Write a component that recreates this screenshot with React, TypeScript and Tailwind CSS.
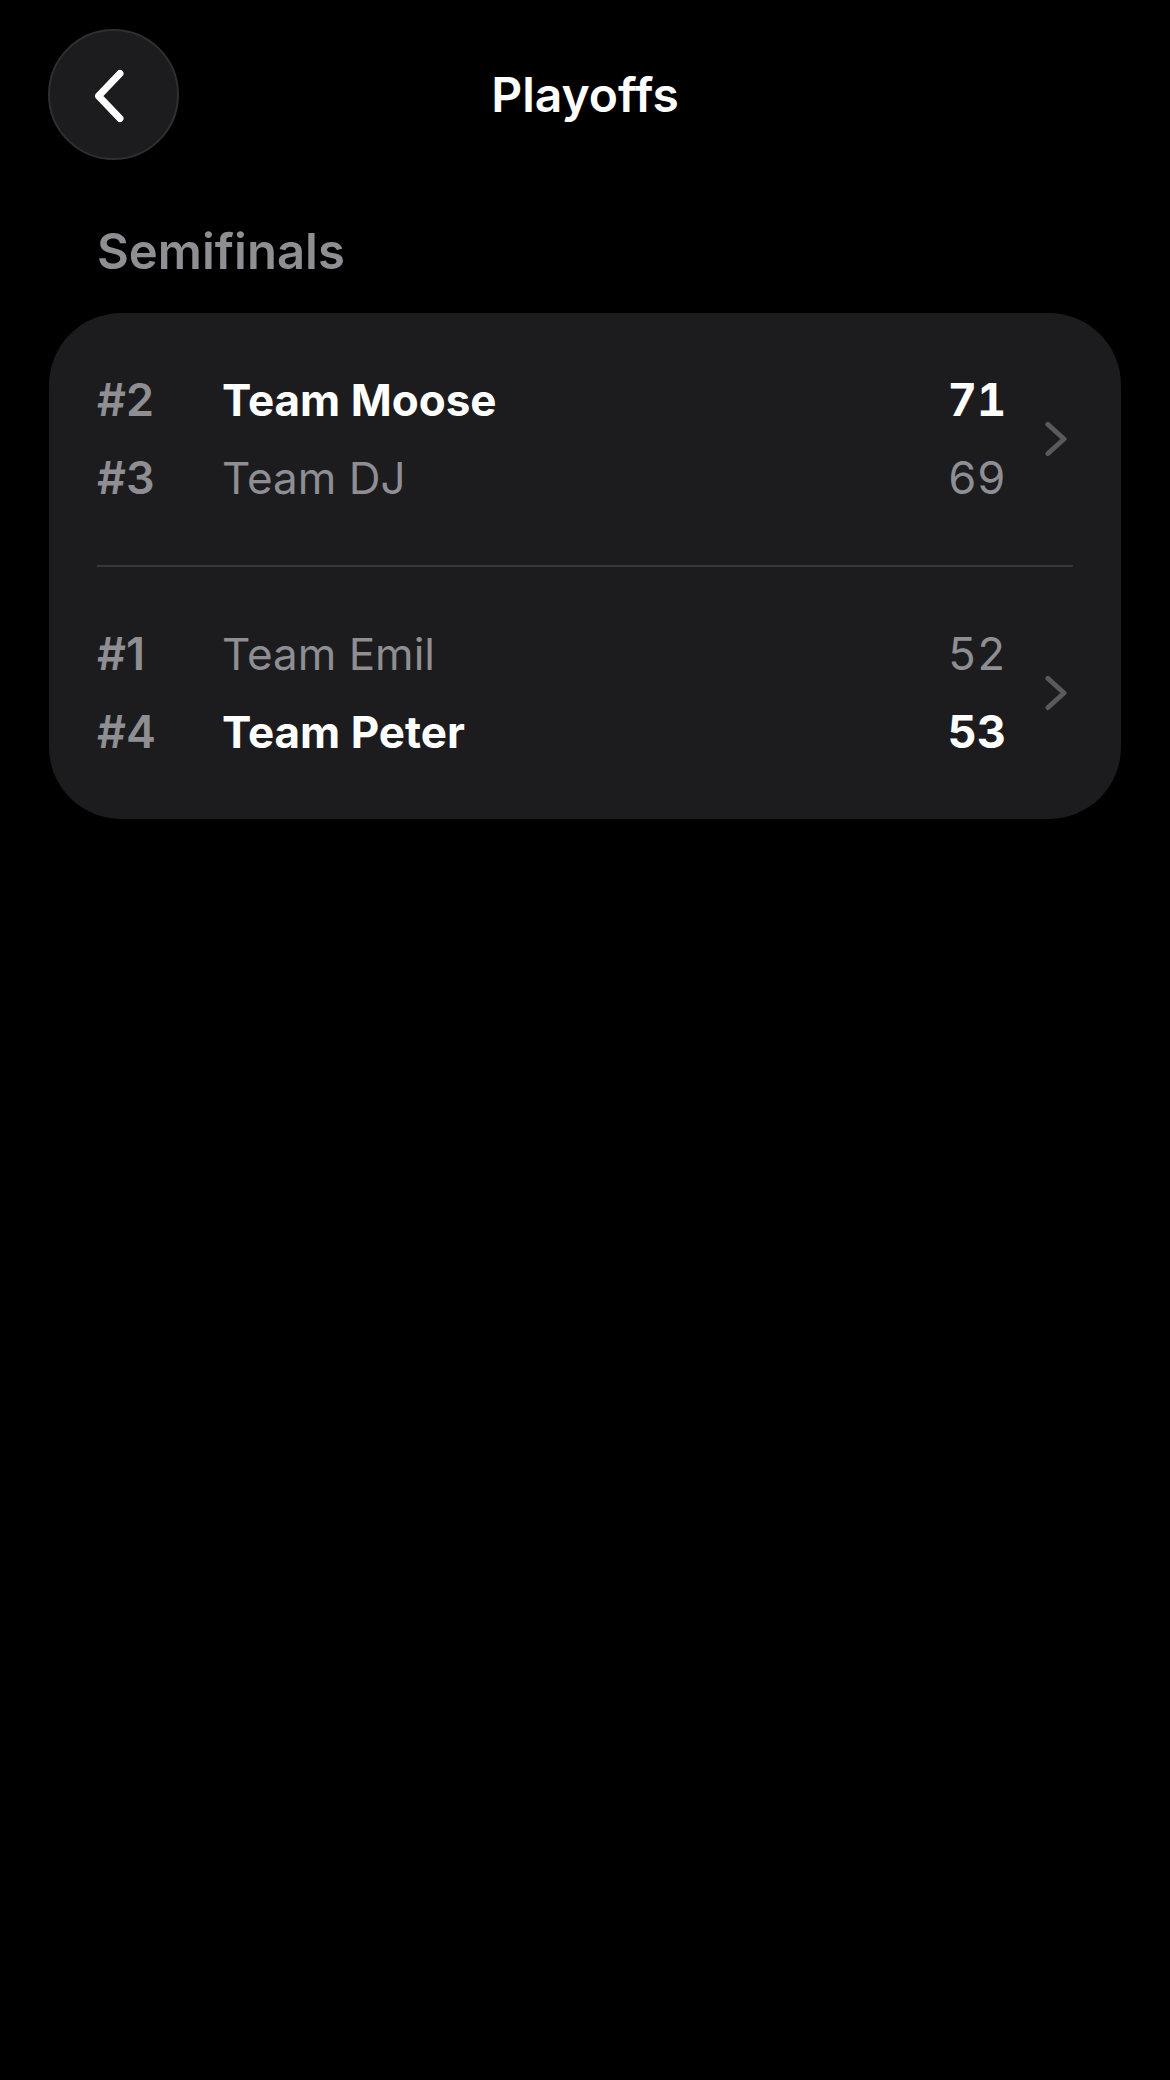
type Side = { seed: string; name: string; score: number; won: boolean };

const matches: Side[][] = [
  [
    { seed: "#2", name: "Team Moose", score: 71, won: true },
    { seed: "#3", name: "Team DJ", score: 69, won: false },
  ],
  [
    { seed: "#1", name: "Team Emil", score: 52, won: false },
    { seed: "#4", name: "Team Peter", score: 53, won: true },
  ],
];

function Chevron() {
  return (
    <svg width="28" height="40" viewBox="0 0 28 40" className="ml-[39px] shrink-0">
      <path
        d="M3 5.5 L19 20 L3 34.5"
        fill="none"
        stroke="#5a5a5e"
        strokeWidth="5"
        strokeLinecap="round"
        strokeLinejoin="round"
      />
    </svg>
  );
}

function Match({ sides }: { sides: Side[] }) {
  return (
    <div className="flex items-center py-12">
      <div className="flex-1">
        {sides.map((s) => (
          <div key={s.seed} className="grid grid-cols-[125px_1fr_auto] text-[44px] leading-[78px]">
            <span className="text-[45px] font-semibold text-[#8e8e93]">{s.seed}</span>
            <span className={s.won ? "font-bold text-white" : "font-normal text-[#8e8e93]"}>
              {s.name}
            </span>
            <span
              className={
                s.won
                  ? "text-[45px] font-bold text-white tabular-nums"
                  : "text-[45px] font-normal text-[#8e8e93] tabular-nums"
              }
            >
              {s.score}
            </span>
          </div>
        ))}
      </div>
      <Chevron />
    </div>
  );
}

export default function App() {
  return (
    <div className="min-h-[2080px] w-full bg-black font-['Inter','Liberation_Sans',sans-serif] text-white">
      <div className="grid grid-cols-[131px_1fr_131px] items-center px-12 pt-[29px]">
        <button className="h-[131px] w-[131px] rounded-full border-2 border-[#2f2f31] bg-[#1c1c1e]">
          <svg width="127" height="127" viewBox="2 2 127 127">
            <path
              d="M72 44.5 L50.5 67 L72 89.5"
              fill="none"
              stroke="white"
              strokeWidth="7"
              strokeLinecap="round"
              strokeLinejoin="round"
            />
          </svg>
        </button>
        <h1 className="text-center text-[48px] font-semibold">Playoffs</h1>
        <div />
      </div>

      <h2 className="mt-[62px] px-[97px] text-[49px] leading-[60px] font-semibold text-[#8e8e93]">
        Semifinals
      </h2>

      <div className="mx-[49px] mt-[31px] rounded-[72px] bg-[#1c1c1e] px-12">
        {matches.map((m, i) => (
          <div key={i}>
            {i > 0 && <div className="h-[2px] bg-[#38383a]" />}
            <Match sides={m} />
          </div>
        ))}
      </div>
    </div>
  );
}
